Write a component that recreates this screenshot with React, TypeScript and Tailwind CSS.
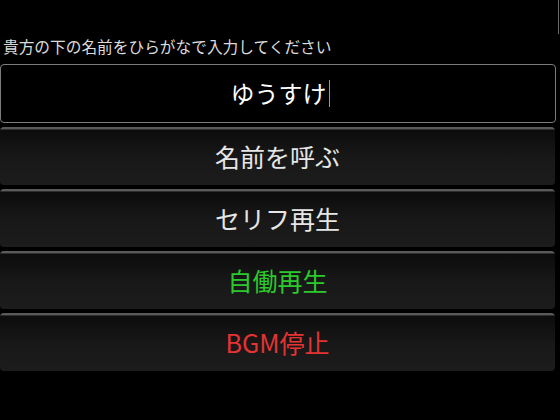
import React from "react";

const font = { fontFamily: '"Noto Sans CJK JP", "Noto Sans", sans-serif' };

function Btn({ label, color }: { label: string; color: string }) {
  return (
    <div className="h-[58px] w-[555px] rounded-[4px] overflow-hidden flex flex-col">
      <div className="h-[2px] bg-[#5a5a5a] rounded-t-[3px]" />
      <div className="h-[1px] bg-[#2e2e2e]" />
      <div className="flex-1 bg-gradient-to-b from-[#0c0c0c] via-[#181818] to-[#1c1c1c] flex items-center justify-center pb-[3px]">
        <span className={`text-[25px] leading-none ${color}`}>{label}</span>
      </div>
    </div>
  );
}

export default function App() {
  return (
    <div className="relative w-[560px] h-[420px] bg-black overflow-hidden" style={font}>
      <div className="absolute right-[1px] top-0 w-[1px] h-[34px] bg-[#6a6a6a]" />
      <div className="pt-[38px] pl-[3px] h-[64px] text-[15.7px] leading-[18px] text-[#dcdcdc]">
        貴方の下の名前をひらがなで入力してください
      </div>
      <div className="w-[556px] h-[59px] border-[1.5px] border-[#7c7c7c] rounded-[4px] flex items-center justify-center">
        <span className="text-[24px] leading-none text-white font-normal pl-[4px] pb-[1px]">ゆうすけ</span>
        <span className="ml-[2px] w-[1px] h-[27px] bg-[#9a9a9a]" />
      </div>
      <div className="mt-[4px] flex flex-col gap-[4px]">
        <Btn label="名前を呼ぶ" color="text-[#e6e6e6]" />
        <Btn label="セリフ再生" color="text-[#e6e6e6]" />
        <Btn label="自働再生" color="text-[#2bc92b]" />
        <Btn label="BGM停止" color="text-[#e53333]" />
      </div>
    </div>
  );
}
